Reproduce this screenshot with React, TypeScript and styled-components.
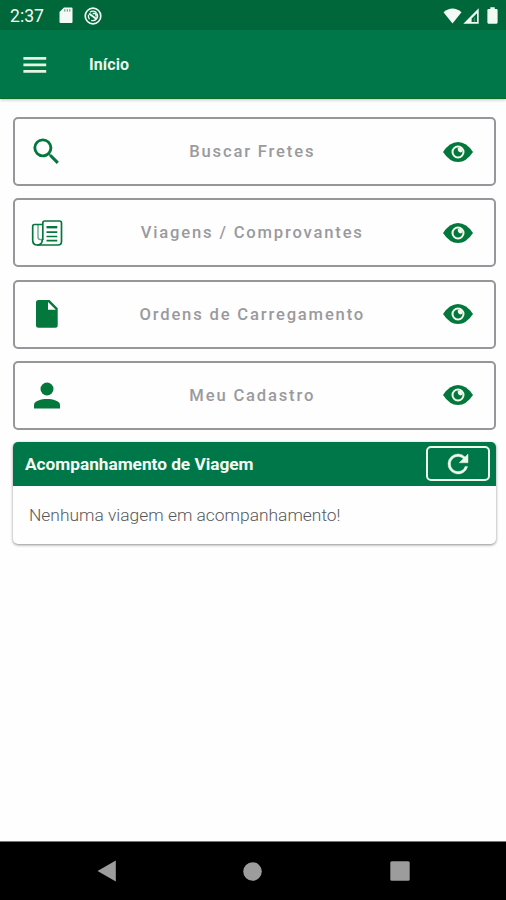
import React from "react";
import styled, { createGlobalStyle } from "styled-components";

const GREEN = "#007748";
const ICON_GREEN = "#04773c";

const GlobalStyle = createGlobalStyle`
  * { box-sizing: border-box; }
  body { margin: 0; background: #fff; font-family: Roboto, "Liberation Sans", sans-serif; }
  svg { display: block; flex: none; }
`;

const Screen = styled.div`
  width: 506px;
  height: 900px;
  display: flex;
  flex-direction: column;
  background: #fefefe;
  overflow: hidden;
`;

const StatusBar = styled.header`
  height: 30px;
  flex: none;
  display: flex;
  align-items: center;
  padding: 1px 8px 0 10px;
  background: #00673b;
  color: #f3faf5;
`;

const Clock = styled.span`
  width: 49px;
  font-size: 17.6px;
  line-height: 28px;
`;

const StatusGroup = styled.div<{ $gap: number; $end?: boolean }>`
  display: flex;
  align-items: center;
  gap: ${(p) => p.$gap}px;
  margin-left: ${(p) => (p.$end ? "auto" : "0")};
`;

const AppBar = styled.div`
  height: 69px;
  flex: none;
  display: flex;
  align-items: center;
  padding: 1px 0 0 23px;
  background: ${GREEN};
  border-bottom: 1px solid #0a6a26;
  box-shadow: 0 1px 3px rgba(60, 50, 80, 0.3);
`;

const MenuButton = styled.button`
  width: 66px;
  padding: 0;
  border: 0;
  background: none;
  color: #e6f5df;
`;

const Title = styled.h1`
  margin: 0;
  font-size: 16px;
  font-weight: 700;
  letter-spacing: 0.1px;
  color: #e9f6ec;
`;

const Content = styled.main`
  flex: 1;
  display: flex;
  flex-direction: column;
  padding: 18px 10px 0 12.5px;
`;

const MenuList = styled.nav`
  display: flex;
  flex-direction: column;
  gap: 12.3px;
`;

const MenuCard = styled.button`
  height: 69px;
  display: grid;
  grid-template-columns: 64px 1fr 72px;
  align-items: center;
  padding: 0;
  border: 2px solid #97979b;
  border-radius: 5px;
  background: #fefefe;
  font-family: inherit;
`;

const IconSlot = styled.span`
  display: flex;
  justify-content: center;
  color: ${ICON_GREEN};
`;

const Label = styled.span`
  padding: 1px 0 0 4px;
  font-size: 16.6px;
  font-weight: 500;
  line-height: 20px;
  letter-spacing: 1.82px;
  text-align: center;
  white-space: nowrap;
  color: #9a9a9e;
`;

const TripPanel = styled.section`
  height: 102px;
  margin-top: 12px;
  border-radius: 5px;
  background: #fefefe;
  box-shadow: 0 1px 3px rgba(0, 0, 0, 0.45);
  overflow: hidden;
`;

const PanelHeader = styled.div`
  height: 44px;
  display: flex;
  align-items: center;
  justify-content: space-between;
  padding: 0 6px 0 12.5px;
  background: ${GREEN};
`;

const PanelTitle = styled.h2`
  margin: 0;
  font-size: 17.3px;
  font-weight: 700;
  letter-spacing: -0.03px;
  color: #f4fbf6;
`;

const RefreshButton = styled.button`
  width: 64px;
  height: 35px;
  display: flex;
  align-items: center;
  justify-content: center;
  padding: 0;
  border: 2px solid #eef8e8;
  border-radius: 5px;
  background: ${GREEN};
  color: #f0faea;
`;

const EmptyMessage = styled.p`
  margin: 18px 0 0 16.5px;
  font-size: 17.4px;
  font-weight: 300;
  line-height: 22px;
  color: #58585c;
`;

const NavBar = styled.footer`
  height: 59px;
  flex: none;
  display: flex;
  justify-content: space-between;
  align-items: center;
  padding: 0 96.5px 0 96.5px;
  border-top: 1px solid #777;
  background: #000;
  color: #9c9c9c;
`;

const MemoryCardIcon = () => (
  <svg width="14" height="17" viewBox="0 0 14 17">
    <path fill="currentColor" d="M5 0.5H12.5Q13.5 .5 13.5 1.5V15Q13.5 16 12.5 16H1.5Q.5 16 .5 15V5Z" />
    <path stroke="#00673b" strokeWidth="1" opacity=".7" d="M5.8 2.2V4.6M8.3 2.2V4.6M10.8 2.2V4.6" />
  </svg>
);

const SyncBadgeIcon = () => (
  <svg width="18" height="18" viewBox="0 0 18 18" fill="none" stroke="currentColor">
    <circle cx="9" cy="9" r="7.8" strokeWidth="1.7" />
    <path strokeWidth="1.4" d="M5.5 12.2A4.7 4.7 0 0 1 4.5 8M12.9 6.6A4.7 4.7 0 0 1 7.2 13.3M6 5.3A4.6 4.6 0 0 1 12.5 5.7" />
    <path strokeWidth="1.9" d="M5 6.4 12.4 12" />
    <path strokeWidth="1.5" d="M8.6 6.5H12V9.4" />
  </svg>
);

const WifiIcon = () => (
  <svg width="19" height="16" viewBox="0 0 19 16">
    <path fill="currentColor" d="M9.5 15.5.5 4.2Q9.5-3.3 18.5 4.2Z" />
  </svg>
);

const SignalIcon = () => (
  <svg width="16" height="16" viewBox="0 0 16 16">
    <path fill="currentColor" fillRule="evenodd" d="M.3 15.7 15.7.3V15.7ZM8.6 13.9H14V5.2L8.6 10.4Z" />
    <path fill="currentColor" d="M10.8 9.5H12.2V13.9H10.8Z" opacity=".25" />
  </svg>
);

const BatteryIcon = () => (
  <svg width="11" height="17" viewBox="0 0 11 17">
    <path fill="currentColor" d="M3.3.3H7.7V2H9.5Q10.6 2 10.6 3.1V15.6Q10.6 16.7 9.5 16.7H1.5Q.4 16.7.4 15.6V3.1Q.4 2 1.5 2H3.3Z" />
  </svg>
);

const MenuIcon = () => (
  <svg width="24" height="18" viewBox="0 0 24 18">
    <path fill="currentColor" d="M.4 1H23.2V3.8H.4ZM.4 7.5H23.2V10.3H.4ZM.4 14H23.2V16.8H.4Z" />
  </svg>
);

const SearchIcon = () => (
  <svg width="35" height="35" viewBox="0 0 24 24">
    <path fill="currentColor" d="M15.5 14h-.79l-.28-.27A6.471 6.471 0 0 0 16 9.5 6.5 6.5 0 1 0 9.5 16c1.61 0 3.09-.59 4.23-1.57l.27.28v.79l5 4.99L20.49 19l-4.99-5zm-6 0C7.01 14 5 11.99 5 9.5S7.01 5 9.5 5 14 7.01 14 9.5 11.99 14 9.5 14z" />
  </svg>
);

const NewsIcon = () => (
  <svg width="32" height="28" viewBox="0 0 32 28" fill="none" stroke="currentColor" strokeLinejoin="round">
    <path strokeWidth="1.7" d="M11.8 21V4Q11.8 2 13.8 2H28.5Q30.5 2 30.5 4V22.5Q30.5 26 27 26H6" />
    <path strokeWidth="1.7" d="M11.8 5.5H3.5Q1.7 5.5 1.7 7.3V21Q1.7 26 6.3 26 11.3 26 11.3 20.5" />
    <path strokeWidth="1.4" opacity=".6" d="M7 6V18Q7 20.5 9.2 20.5H11.5" />
    <path strokeWidth="2.4" d="M15.5 8.2H26.3" />
    <path strokeWidth="1.7" d="M15.5 13.2H26.3M15.5 17.5H26.3M15.5 21.7H26.3" />
  </svg>
);

const FileIcon = () => (
  <svg width="22" height="28" viewBox="0 0 22 28">
    <path fill="currentColor" fillRule="evenodd" d="M2.5 0H13.5L21.7 8.2V25.3Q21.7 27.8 19.2 27.8H2.5Q0 27.8 0 25.3V2.5Q0 0 2.5 0ZM12 2V9.8H19.8Z" />
  </svg>
);

const PersonIcon = () => (
  <svg width="26" height="27" viewBox="0 0 26 27">
    <circle cx="13" cy="7" r="6.5" fill="currentColor" />
    <path fill="currentColor" d="M0 26.5V22.8C0 18.8 7.5 17 13 17S26 18.8 26 22.8V26.5Z" />
  </svg>
);

const EyeIcon = () => (
  <svg width="30" height="20" viewBox="0 0 30 20">
    <path fill="currentColor" d="M0 10Q6.5 0 15 0T30 10Q23.5 20 15 20T0 10Z" />
    <circle cx="15" cy="10" r="5.5" fill="none" stroke="#f4fbef" strokeWidth="2" />
    <path fill="#f4fbef" d="M14.8 5.8H18.5L19.3 9.5Q17.3 11.2 15.6 9.6 14.4 8.1 14.8 5.8Z" />
  </svg>
);

const RefreshIcon = () => (
  <svg width="30" height="30" viewBox="0 0 24 24">
    <path
      fill="currentColor"
      stroke="currentColor"
      strokeWidth="0.35"
      d="M17.65 6.35A7.958 7.958 0 0 0 12 4a8 8 0 1 0 7.73 10h-2.08A5.99 5.99 0 0 1 12 18c-3.31 0-6-2.69-6-6s2.69-6 6-6c1.66 0 3.14.69 4.22 1.78L13 11h7V4l-2.35 2.35z"
    />
  </svg>
);

const entries = [
  { label: "Buscar Fretes", icon: <SearchIcon /> },
  { label: "Viagens / Comprovantes", icon: <NewsIcon /> },
  { label: "Ordens de Carregamento", icon: <FileIcon /> },
  { label: "Meu Cadastro", icon: <PersonIcon /> },
];

export default function App() {
  return (
    <Screen>
      <GlobalStyle />
      <StatusBar>
        <Clock>2:37</Clock>
        <StatusGroup $gap={11}>
          <MemoryCardIcon />
          <SyncBadgeIcon />
        </StatusGroup>
        <StatusGroup $gap={8} $end>
          <StatusGroup $gap={1}>
            <WifiIcon />
            <SignalIcon />
          </StatusGroup>
          <BatteryIcon />
        </StatusGroup>
      </StatusBar>
      <AppBar>
        <MenuButton aria-label="Menu">
          <MenuIcon />
        </MenuButton>
        <Title>Início</Title>
      </AppBar>
      <Content>
        <MenuList>
          {entries.map((entry) => (
            <MenuCard key={entry.label}>
              <IconSlot>{entry.icon}</IconSlot>
              <Label>{entry.label}</Label>
              <IconSlot>
                <EyeIcon />
              </IconSlot>
            </MenuCard>
          ))}
        </MenuList>
        <TripPanel>
          <PanelHeader>
            <PanelTitle>Acompanhamento de Viagem</PanelTitle>
            <RefreshButton aria-label="Atualizar">
              <RefreshIcon />
            </RefreshButton>
          </PanelHeader>
          <EmptyMessage>Nenhuma viagem em acompanhamento!</EmptyMessage>
        </TripPanel>
      </Content>
      <NavBar>
        <svg width="19" height="22" viewBox="0 0 19 22">
          <path fill="currentColor" d="M.5 11 18.8.5V21.5Z" />
        </svg>
        <svg width="19" height="19" viewBox="0 0 19 19">
          <circle cx="9.5" cy="9.5" r="9.3" fill="currentColor" />
        </svg>
        <svg width="20" height="20" viewBox="0 0 20 20">
          <rect x=".3" y=".3" width="19.4" height="19.4" rx="1.5" fill="currentColor" />
        </svg>
      </NavBar>
    </Screen>
  );
}
